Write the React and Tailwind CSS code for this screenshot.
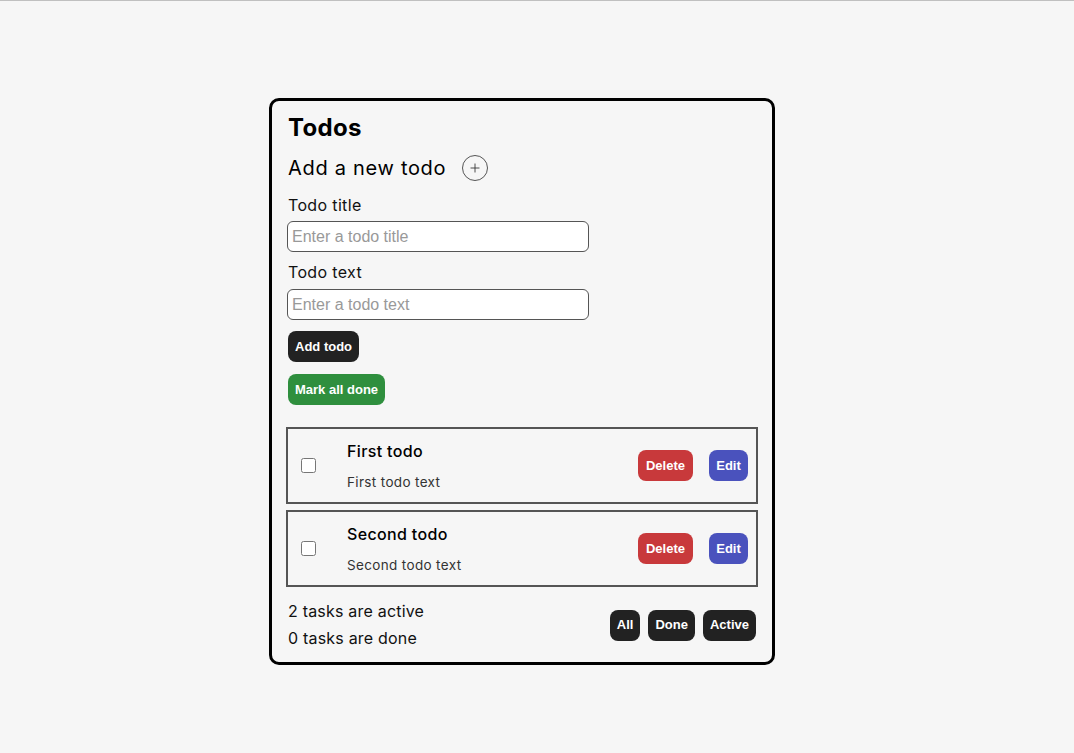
import { Plus } from 'lucide-react';

const todos = [
  { id: 1, title: 'First todo', text: 'First todo text' },
  { id: 2, title: 'Second todo', text: 'Second todo text' },
];

const btn = "h-[31px] px-[7px] rounded-[8px] text-white text-[13px] font-bold font-['Liberation_Sans'] tracking-normal";
const field = "block w-[302px] h-[31px] -ml-px bg-white border border-[#555] rounded-[6px] px-1 text-[16px] font-['Liberation_Sans'] tracking-normal placeholder:text-[#999] outline-none";

export default function App() {
  return (
    <div className="min-h-screen bg-[#f6f6f6] border-t border-[#c0c0c0] pt-[97px] pl-[269px] font-['Inter'] tracking-[0.35px] text-black">
      <div className="w-[506px] border-[3px] border-black rounded-[10px] px-4 pt-[12px] pb-[10px]">
        <h2 className="text-[24px] font-bold leading-[30px] tracking-[0.3px]">Todos</h2>
        <div className="flex items-center gap-4 mt-[10px]">
          <h3 className="text-[20px] leading-[30px] tracking-[0.7px]">Add a new todo</h3>
          <button className="w-[26px] h-[26px] rounded-full border border-[#555] flex items-center justify-center text-[#333]">
            <Plus className="w-[14px] h-[14px]" strokeWidth={1.5} />
          </button>
        </div>
        <label className="block mt-[12px] text-[16px] leading-[20px] text-[#111]">Todo title</label>
        <input className={`${field} mt-[6px]`} placeholder="Enter a todo title" />
        <label className="block mt-[10px] text-[16px] leading-[20px] text-[#111]">Todo text</label>
        <input className={`${field} mt-[7px]`} placeholder="Enter a todo text" />
        <button className={`${btn} block mt-[11px] bg-[#222]`}>Add todo</button>
        <button className={`${btn} block mt-[12px] bg-[#2f8f3e]`}>Mark all done</button>
        <div className="mt-[22px] -mx-0.5 flex flex-col gap-[6px]">
          {todos.map((t) => (
            <div key={t.id} className="h-[77px] border-2 border-[#555] flex items-center pl-[13px] pr-2">
              <input type="checkbox" className="w-[15px] h-[15px] m-0" />
              <div className="ml-[31px] flex-1 pb-[1px]">
                <div className="text-[16px] font-medium leading-[20px]">{t.title}</div>
                <div className="mt-[13px] text-[13.5px] leading-[16px] text-[#333]">{t.text}</div>
              </div>
              <button className={`${btn} w-[55px] px-0 bg-[#c8393b]`}>Delete</button>
              <button className={`${btn} ml-4 w-[39px] px-0 bg-[#4a52bd]`}>Edit</button>
            </div>
          ))}
        </div>
        <div className="mt-[11px] flex items-center justify-between">
          <div className="text-[16px] leading-[27px] text-[#111] tracking-[0.2px]">
            <p>2 tasks are active</p>
            <p>0 tasks are done</p>
          </div>
          <div className="flex gap-2">
            <button className={`${btn} bg-[#222]`}>All</button>
            <button className={`${btn} bg-[#222]`}>Done</button>
            <button className={`${btn} bg-[#222]`}>Active</button>
          </div>
        </div>
      </div>
    </div>
  );
}
